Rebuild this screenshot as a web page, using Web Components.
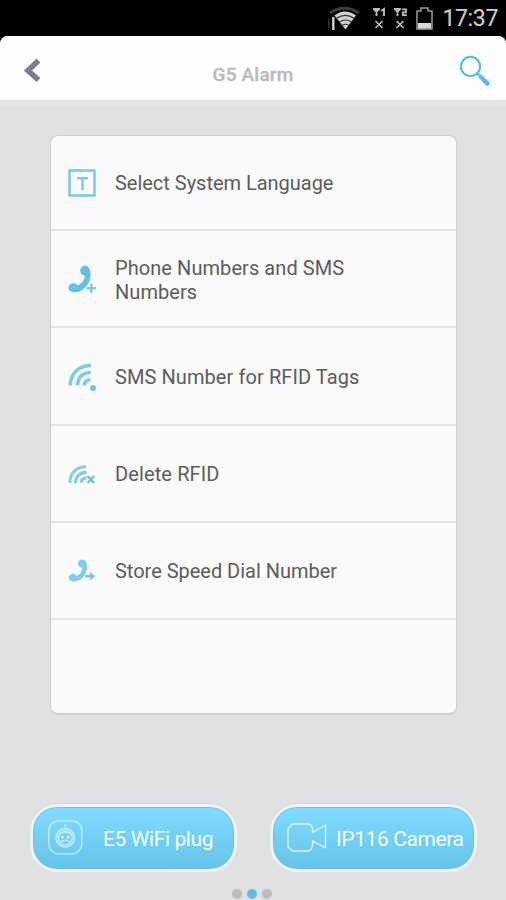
<!DOCTYPE html>
<html lang="en">
<head>
<meta charset="utf-8">
<title>G5 Alarm</title>
<style>
html,body{margin:0;height:100%;background:#000}
body{font-family:Roboto,"Liberation Sans",sans-serif;overflow:hidden}
</style>
</head>
<body>
<alarm-app>
  <status-bar slot="status">17:37</status-bar>
  <title-bar slot="title">G5 Alarm</title-bar>
  <option-list>
    <option-row icon="language" style="--h:93px;--track:-.02px;--shift:1px;--drop:3px">Select System Language</option-row>
    <option-row icon="phone" style="--h:95px;--track:.07px;--drop:4px">Phone Numbers and SMS Numbers</option-row>
    <option-row icon="signal" style="--h:96px;--track:.08px;--shift:2px;--drop:4px">SMS Number for RFID Tags</option-row>
    <option-row icon="signaldel" style="--h:95px;--track:.12px;--drop:2px">Delete RFID</option-row>
    <option-row icon="dial" style="--h:95px;--track:-.02px;--drop:2px">Store Speed Dial Number</option-row>
  </option-list>
  <device-button slot="devices" icon="plug" style="--pad:15px;--gap:20px">E5 WiFi plug</device-button>
  <device-button slot="devices" icon="camera" style="--pad:14px;--gap:9px">IP116 Camera</device-button>
  <page-dots slot="pages" count="3" current="1"></page-dots>
</alarm-app>
<script>
const ICONS = {
  language: `<svg width="28" height="28" viewBox="0 0 28 28" fill="none" stroke="#7fcbe6"><rect x="1.500" y="1.500" width="25" height="25" stroke-width="2.600"/><path d="M9 9.300H20M14.500 9.300V21" stroke-width="2.600"/></svg>`,
  phone: `<svg width="28" height="28" viewBox="0 0 28 28" fill="#67bfe2"><path d="M14.2 1.4C16 .1 18.200.1 19.500 1.200C23.500 5 23.600 12.500 20.500 18.200C17.500 23.500 11.500 28 5.500 27.300C2.500 27 .4 24.800.5 22.500C.6 20.500 2 19.300 4 18.600C6 17.800 8.300 18 9.600 20.500C13.500 19 16.500 15 16.800 10.600C14.500 10.500 12.500 8.500 12.200 6C12 4.200 12.800 2.400 14.200 1.400Z"/><path d="M23.300 18.500V28M18.600 23.200H28" stroke="#fafafa" stroke-width="4.400"/><path d="M23.300 18.500V28M18.600 23.200H28" stroke="#7fcbe6" stroke-width="2.400"/></svg>`,
  signal: `<svg width="28" height="28" viewBox="0 0 28 28" fill="none" stroke="#80cbe5" stroke-width="3.700"><path d="M2.200 22.500C2.500 11 10 2.600 23 2.300M9.500 22.500C10 15 14 9.700 22.800 9.500M16 22.500C16.500 19 18.500 17 22.500 16.700"/><circle cx="25" cy="25" r="3" fill="#6dc2e2" stroke="none"/></svg>`,
  signaldel: `<svg width="28" height="28" viewBox="0 0 28 28" fill="none" stroke="#86cfe1" stroke-width="3.100"><path d="M1.800 23.300C1.800 13.500 8 6.700 18.200 6.700M7.300 23.300C7.800 16.500 11.500 12.500 18.500 12.400M12.800 22.800C13.300 19.500 15 18 18.500 18.100"/><path d="M19.500 16L26 23M26 16L19.500 23" stroke="#72c5d7" stroke-width="2.500"/></svg>`,
  dial: `<svg width="28" height="28" viewBox="0 0 28 28" fill="#80cbe5"><path d="M11.500 3.500C14.500 1.600 17.500 2.800 18.600 6C20.400 11.500 18 18 13.500 21.800C9.600 25 4.200 25.300 1.800 23C-.1 20.900.7 18.300 3.400 17.200C5.700 16.300 7.400 17 8.400 18.900C12 17.800 14.300 14.400 14.200 10.600C12 10.600 10.300 9 10 7C9.900 5.500 10.400 4.200 11.500 3.500Z"/><path d="M17 19.200H24" stroke="#77c6e2" stroke-width="2.400"/><path d="M22 15L27.300 19.200L22 23.400Z" fill="#77c6e2"/></svg>`,
  plug: `<svg width="35" height="35" viewBox="0 0 35 35" fill="none" stroke="#c4effa" stroke-width="1.250"><rect x=".8" y=".8" width="33" height="33" rx="10"/><circle cx="17.300" cy="17.800" r="9.200" stroke-width="1.600"/><circle cx="17.300" cy="17.800" r="7"/><path d="M17.300 4V8M11 14.500Q17.300 9.500 23.600 14.500M12.500 22Q17.300 18.500 22.100 22"/><g fill="#e2fafe" stroke="none"><circle cx="14.300" cy="17.300" r="1.200"/><circle cx="20.300" cy="17.300" r="1.200"/></g></svg>`,
  camera: `<svg width="40" height="29" viewBox="0 0 40 29" fill="none" stroke="#d8f5fb" stroke-width="1.400"><path d="M5.500 1H21.500Q25.500 2 25.500 6V9.500L38.500 2V25L25.500 17.800V22Q25 27 21.500 28H5.500L1 24V5.500Z" stroke-linejoin="round"/></svg>`
};

function define(name, html, setup) {
  const template = document.createElement('template');
  template.innerHTML = html;
  customElements.define(name, class extends HTMLElement {
    constructor() {
      super();
      this.attachShadow({mode: 'open'}).append(template.content.cloneNode(true));
    }
    connectedCallback() { if (setup) setup(this, this.shadowRoot); }
  });
}

const putIcon = (host, root) => { root.querySelector('.icon').innerHTML = ICONS[host.getAttribute('icon')]; };

define('alarm-app', `<style>
:host{display:flex;flex-direction:column;width:506px;height:900px;background:#000}
main{flex:1;min-height:0;display:flex;flex-direction:column;background:#e0e1e3;border-radius:8px 8px 0 0;overflow:hidden}
.list{padding:29px 49px 0 50px}
.devices{display:flex;justify-content:space-between;padding:89px 29px 0 30px}
.pages{padding-top:17px;display:flex;justify-content:center;margin-right:3px}
</style>
<slot name="status"></slot>
<main><slot name="title"></slot><div class="list"><slot></slot></div>
<div class="devices"><slot name="devices"></slot></div><div class="pages"><slot name="pages"></slot></div></main>`);

define('status-bar', `<style>
:host{display:flex;height:36px;flex:none;align-items:center;justify-content:flex-end;box-sizing:border-box;padding-right:8px;color:#c9c9c9;background:#000}
.wifi{margin-right:13px}.sims{display:flex;gap:7px;margin-right:8px}
.bat{margin-right:9px}svg{display:block}
.time{font-size:23px;line-height:36px;letter-spacing:-.35px;-webkit-text-stroke:.2px #c9c9c9;padding-top:1px}
</style>
<svg class="wifi" width="32" height="25" viewBox="0 0 32 25" fill="none"><path d="M2 7Q16 -2.500 31 7" stroke="#3d3d3d" stroke-width="3"/><path d="M6.500 9.500Q17 1.500 28 9.500L17.500 23.500Z" fill="#d0d0d0"/><path d="M8.500 12.300Q17.500 6.500 26 12.300M11.500 16Q17.500 12 23.500 16M14 19.500Q17.500 17 21 19.500" stroke="#333" stroke-width="1.100"/><path d="M5.300 11V24" stroke="#ccc" stroke-width="2.500"/><path d="M1 12V22" stroke="#333" stroke-width="1.500"/></svg>
<div class="sims">
<svg width="14" height="24" viewBox="0 0 14 24" fill="none" stroke="#bcbcbc"><path d="M0 3H7M1 3L3.500 6L6 3M3.500 3V10M8 5L11 3V10" stroke-width="1.900"/><path d="M2.500 15L9.500 22M9.500 15L2.500 22" stroke-width="1.700"/></svg>
<svg width="14" height="24" viewBox="0 0 14 24" fill="none" stroke="#bcbcbc"><path d="M0 3H7M1 3L3.500 6L6 3M3.500 3V10M8 3.300H12V6.300H8.800V9.200H13" stroke-width="1.800"/><path d="M2.500 15L9.500 22M9.500 15L2.500 22" stroke-width="1.700"/></svg>
</div>
<svg class="bat" width="17" height="23" viewBox="0 0 17 23"><path d="M5 1H12V4H16V22H1V4H5Z" fill="none" stroke="#9c9c9c" stroke-width="1.500"/><path d="M2 16H15V21.500H2Z" fill="#d8d8d8"/></svg>
<span class="time"><slot></slot></span>`);

define('title-bar', `<style>
:host{display:grid;grid-template-columns:50px 1fr 50px;height:70px;flex:none;box-sizing:border-box;background:#fdfefd;border-bottom:5px solid #e6e7e6;box-shadow:inset 0 -1px #dfe1de}
h1{margin:0;font-size:19px;font-weight:500;color:#bababa;-webkit-text-stroke:.3px #bababa;text-align:center;line-height:22px;padding-top:28px;letter-spacing:.2px}
svg{display:block}.back{margin:22px 0 0 24px}.search{margin:19px 0 0 3px}
</style>
<svg class="back" width="18" height="25" viewBox="0 0 18 25" fill="none" stroke="#7c7f88" stroke-width="5.600"><path d="M14.500 2.500L4 12.500L14.500 22"/></svg>
<h1><slot></slot></h1>
<svg class="search" width="33" height="33" viewBox="0 0 33 33" fill="none" stroke="#64bbd9"><circle cx="11.500" cy="11.500" r="9.600" stroke-width="2.300"/><path d="M18.300 18.300L22 22" stroke-width="2.500"/><path d="M22 22L28.500 28.700" stroke-width="4.600" stroke-linecap="round"/></svg>`);

define('option-list', `<style>
:host{display:block;height:580px;box-sizing:border-box;background:#fafafa;border:1px solid #cdcecb;border-bottom-width:2px;border-radius:8px;overflow:hidden}
</style><slot></slot>`);

define('option-row', `<style>
:host{display:flex;height:var(--h);align-items:center;padding-left:17px;border-bottom:2px solid #e2e2e2}
.icon{width:28px;height:28px;flex:none;margin-right:19px;padding-top:var(--shift,0)}
.icon svg{display:block}
.text{font-size:20px;line-height:23.500px;color:#5b5c5d;letter-spacing:var(--track);width:265px;padding-top:var(--drop,0)}
</style><span class="icon"></span><span class="text"><slot></slot></span>`, putIcon);

define('device-button', `<style>
:host{display:flex;align-items:center;width:207px;height:68px;box-sizing:border-box;border:3px solid #eff2f4;border-radius:27px;background:linear-gradient(#83dcff,#65c2e8) padding-box;box-shadow:inset 0 0 0 1px #79bfdc,0 -1px 1px #d2d2d2;padding-left:var(--pad);padding-bottom:1px}
.icon{flex:none;margin-right:var(--gap)}.icon svg{display:block}
.text{font-size:21px;line-height:28px;color:#f2fdff;white-space:nowrap;letter-spacing:-.4px;padding-top:3px}
</style><span class="icon"></span><span class="text"><slot></slot></span>`, putIcon);

define('page-dots', `<style>
:host{display:flex;gap:5px}
i{width:10px;height:10px;border-radius:50%;background:#bbbcbd}
i.on{background:#5fbfe3}
</style>`, (host, root) => {
  for (let n = 0; n < +host.getAttribute('count'); n++) {
    const dot = document.createElement('i');
    if (n === +host.getAttribute('current')) dot.className = 'on';
    root.append(dot);
  }
});
</script>
</body>
</html>
